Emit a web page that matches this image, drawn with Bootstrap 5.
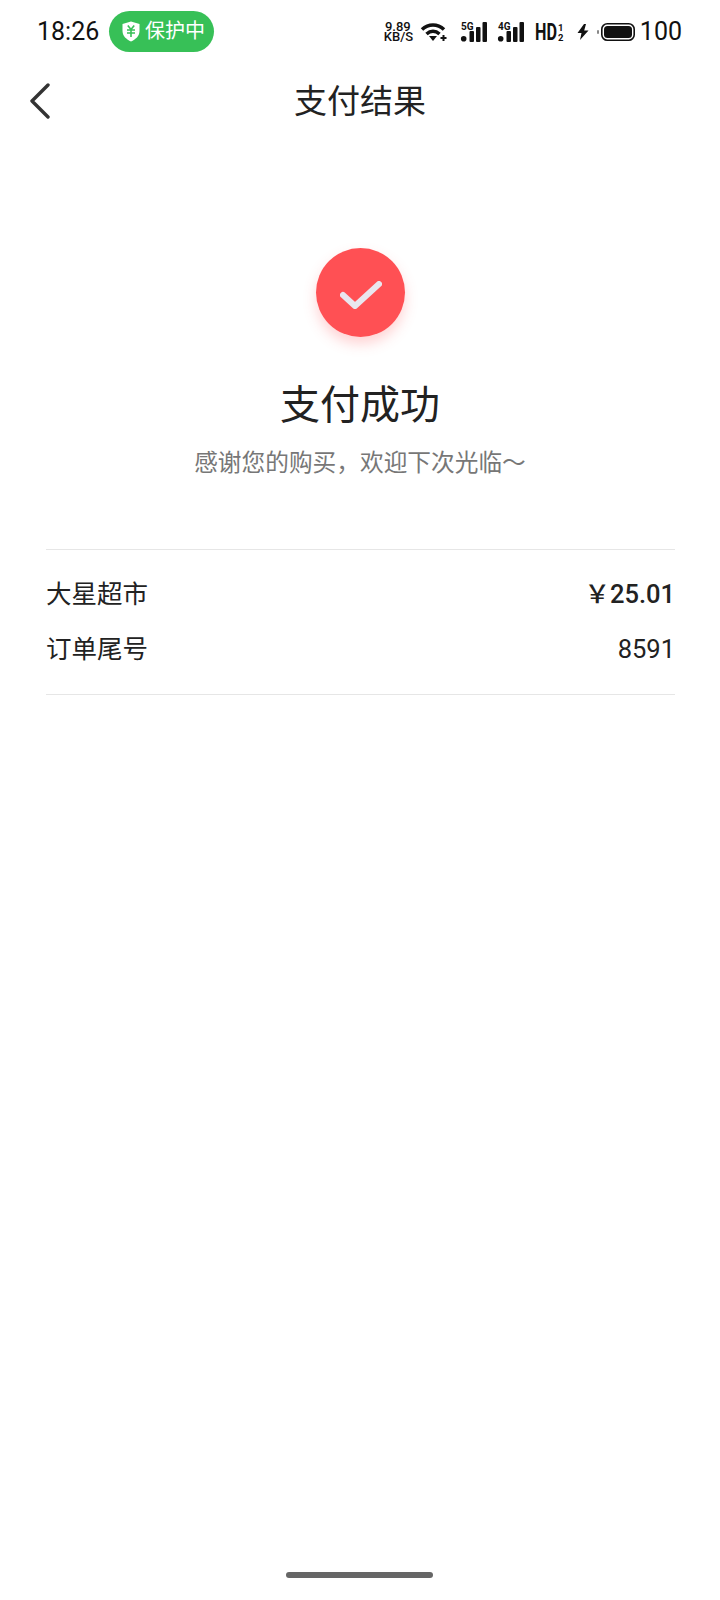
<!DOCTYPE html>
<html lang="zh">
<head>
  <title>支付结果</title>
  <meta charset="UTF-8">
  <link href="https://cdn.jsdelivr.net/npm/bootstrap@5.3.0/dist/css/bootstrap.min.css" rel="stylesheet">
  <script src="https://cdn.jsdelivr.net/npm/bootstrap@5.3.0/dist/js/bootstrap.bundle.min.js"></script>
  <style>
    body { font-family: Roboto, "Noto Sans CJK SC", sans-serif; color: #222; background: #fff; }
    .phone { width: 720px; height: 1600px; }
    .status-bar { height: 62px; padding: 0 38px 0 37px; }
    .clock { font-size: 25px; color: #111; width: 62px; margin: 2px 10px 0 0; }
    .guard-pill { width: 105px; height: 41px; background: #37c057; color: #fff; font-size: 20px; padding-left: 13px; gap: 5px; }
    .status-icons { margin-top: 2px; }
    .status-icons svg { display: block; overflow: visible; }
    .speed { font-size: 13px; line-height: 10.5px; font-weight: 500; color: #111; text-align: center; width: 28px; margin-right: 9px; }
    .ic-wifi { margin-right: 14px; }
    .ic-sig { margin-right: 11px; }
    .ic-hd { margin-right: 12px; }
    .ic-bolt { margin-right: 8px; }
    .batt-num { font-size: 25px; color: #111; margin-left: 5px; }
    .nav-head { height: 78px; }
    .nav-head h1 { font-size: 33px; font-weight: 400; margin: 0 0 -2px; color: #222; }
    .back-btn { position: absolute; left: 29px; top: 21px; }
    .ok-wrap { padding-top: 108px; }
    .ok-circle { width: 89px; height: 89px; background: #ff5054; box-shadow: 0 7px 13px rgba(255, 79, 83, .25); }
    .ok-check { filter: blur(.6px); }
    .ok-title { font-size: 40px; font-weight: 400; line-height: 56px; margin: 41px 0 0; color: #222; }
    .ok-sub { font-size: 23.7px; line-height: 32px; margin: 13px 0 0; color: #777; }
    .info-box { margin: 70px 45px 0 46px; padding: 17px 0 17px; border-top: 1px solid #e6e6e6; border-bottom: 1px solid #e6e6e6; }
    .info-row { height: 55px; font-size: 25.5px; color: #222; }
    .price { font-weight: 500; }
    .home-bar { position: absolute; left: 286px; top: 1572px; width: 147px; height: 6px; background: #666; }
  </style>
</head>
<body>
<div class="phone position-relative overflow-hidden">

  <div class="status-bar d-flex align-items-center">
    <span class="clock">18:26</span>
    <span class="guard-pill rounded-pill d-flex align-items-center">
      <svg width="18" height="21" viewBox="0 0 18 21"><path d="M9 0.5 L17.5 3 V10 C17.5 15 13.5 18.5 9 20.5 C4.5 18.5 0.5 15 0.5 10 V3 Z" fill="#fff"/><path d="M5.8 4.5 L9 8.5 L12.2 4.5 M5 9 H13 M5 12 H13 M9 8.5 V16" fill="none" stroke="#37c057" stroke-width="1.6"/></svg>
      <span>保护中</span>
    </span>
    <span class="status-icons ms-auto d-flex align-items-center">
      <span class="speed">9.89<br>KB/S</span>
      <svg class="ic-wifi" width="26" height="18" viewBox="0 0 26 18"><path d="M1 6.5 C7.5 0.5 16.5 0.5 23 6.5 M5.5 11 C9.5 7.5 14.5 7.5 18.5 11" fill="none" stroke="#111" stroke-width="3.6"/><path d="M8 13 L16 13 L12 18 Z" fill="#111"/><path d="M19.5 15 h6 M22.5 12 v6" stroke="#111" stroke-width="2"/></svg>
      <svg class="ic-sig" width="26" height="20" viewBox="0 0 26 20"><text x="0" y="8" font-size="10" font-weight="700" font-family="Roboto" fill="#111">5G</text><circle cx="2.7" cy="16.8" r="2.8" fill="#111"/><rect x="8.5" y="9" width="4.5" height="11" rx="1" fill="#111"/><rect x="15" y="5" width="4.5" height="15" rx="1" fill="#111"/><rect x="21.5" y="0" width="4.5" height="20" rx="1" fill="#111"/></svg>
      <svg class="ic-sig" width="26" height="20" viewBox="0 0 26 20"><text x="0" y="8" font-size="10" font-weight="700" font-family="Roboto" fill="#111">4G</text><circle cx="2.7" cy="16.8" r="2.8" fill="#111"/><rect x="8.5" y="9" width="4.5" height="11" rx="1" fill="#111"/><rect x="15" y="5" width="4.5" height="15" rx="1" fill="#111"/><rect x="21.5" y="0" width="4.5" height="20" rx="1" fill="#111"/></svg>
      <svg class="ic-hd" width="30" height="28" viewBox="0 0 30 28"><text x="0" y="22" font-size="23" font-weight="700" font-family="Roboto" textLength="22" lengthAdjust="spacingAndGlyphs" fill="#111">HD</text><text x="23" y="13" font-size="9.5" font-weight="700" font-family="Roboto" fill="#111">1</text><text x="23" y="22.5" font-size="9.5" font-weight="700" font-family="Roboto" fill="#111">2</text></svg>
      <svg class="ic-bolt" width="12" height="16" viewBox="0 0 12 16"><path d="M7 0 L0.5 9 H4.5 L3 16 L11.5 6.5 H7.2 L9 0 Z" fill="#111"/></svg>
      <svg width="38" height="18" viewBox="0 0 38 18"><rect x="0" y="7" width="2" height="4" rx="1" fill="#888"/><rect x="4.8" y="0.8" width="32.4" height="16.4" rx="5.5" fill="none" stroke="#111" stroke-width="1.6"/><rect x="7" y="3" width="28" height="12" rx="3.5" fill="#111"/></svg>
      <span class="batt-num">100</span>
    </span>
  </div>

  <div class="nav-head position-relative d-flex align-items-center justify-content-center">
    <svg class="back-btn" width="22" height="36" viewBox="0 0 22 36"><path d="M19 2 L3 18 L19 34" fill="none" stroke="#333" stroke-width="3.4" stroke-linecap="round" stroke-linejoin="round"/></svg>
    <h1>支付结果</h1>
  </div>

  <div class="ok-wrap d-flex flex-column align-items-center text-center">
    <div class="ok-circle rounded-circle d-flex align-items-center justify-content-center">
      <svg class="ok-check" width="46" height="36" viewBox="0 0 46 36"><path d="M6 20 L18 31 L42 9" fill="none" stroke="#e9e6ee" stroke-width="6" stroke-linecap="round" stroke-linejoin="round"/></svg>
    </div>
    <h2 class="ok-title">支付成功</h2>
    <p class="ok-sub">感谢您的购买，欢迎下次光临～</p>
  </div>

  <div class="info-box">
    <div class="info-row d-flex justify-content-between align-items-center">
      <span>大星超市</span>
      <span class="price">￥25.01</span>
    </div>
    <div class="info-row d-flex justify-content-between align-items-center">
      <span>订单尾号</span>
      <span>8591</span>
    </div>
  </div>

  <div class="home-bar rounded-pill"></div>
</div>
</body>
</html>
